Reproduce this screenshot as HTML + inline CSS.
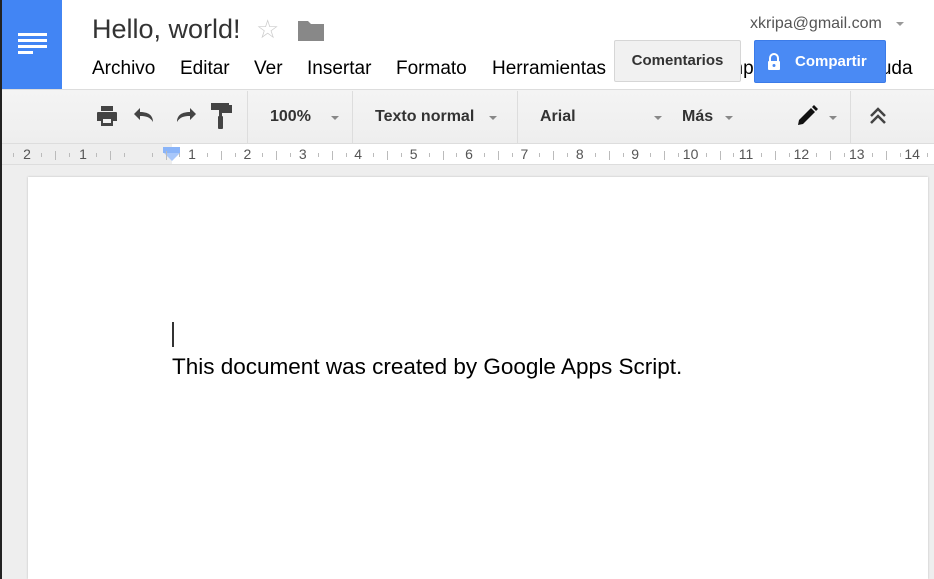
<!DOCTYPE html>
<html><head><meta charset="utf-8"><style>
*{margin:0;padding:0;box-sizing:border-box}
body{width:934px;height:579px;overflow:hidden;background:#eee;font-family:"Liberation Sans",Arial,sans-serif;position:relative}
.a{position:absolute}
.menu span{position:absolute;top:58px;font-size:19px;color:#000}
.tb{font-size:16px;font-weight:bold;color:#333;top:108px}
.dd{width:0;height:0;border-left:4px solid transparent;border-right:4px solid transparent;border-top:4px solid #888;top:116px}
.sep{top:91px;width:1px;height:52px;background:#ddd}
.rn{top:146px;font-size:14px;color:#555;transform:translateX(-50%)}
.tk{top:151px;width:1px;height:9px;background:#bbb}
.tks{top:153px;width:1px;height:4px;background:#bbb}
</style></head><body>
<div class="a" style="left:0;top:0;width:2px;height:579px;background:#222"></div>
<div class="a" style="left:2px;top:0;width:932px;height:90px;background:#fff"></div>
<div class="a" style="left:2px;top:0;width:60px;height:90px;background:#4285f4"></div>
<div class="a" style="left:18px;top:33px;width:29px;height:3px;background:#fff"></div>
<div class="a" style="left:18px;top:39px;width:29px;height:3px;background:#fff"></div>
<div class="a" style="left:18px;top:45px;width:29px;height:3px;background:#fff"></div>
<div class="a" style="left:18px;top:51px;width:15px;height:3px;background:#fff"></div>
<div class="a" style="left:92px;top:14px;font-size:27px;color:#333">Hello, world!</div>
<div class="a" style="left:256px;top:14px;font-size:26px;color:#ccc">☆</div>
<svg class="a" style="left:298px;top:19px" width="26" height="22"><path d="M0 2h10l3 3h13v17H0z" fill="#888"/></svg>
<div class="menu">
<span style="left:92px">Archivo</span><span style="left:180px">Editar</span><span style="left:254px">Ver</span><span style="left:307px">Insertar</span><span style="left:396px">Formato</span><span style="left:492px">Herramientas</span><span style="left:703px">Complementos</span><span style="left:859px">Ayuda</span>
</div>
<div class="a" style="left:750px;top:15px;font-size:16px;color:#555">xkripa@gmail.com</div>
<div class="a dd" style="top:22px;left:896px;border-top-color:#999"></div>
<div class="a" style="left:614px;top:40px;width:127px;height:42px;background:#f1f1f1;border:1px solid #d6d6d6;border-radius:2px;font-size:15px;font-weight:bold;color:#333;text-align:center;line-height:40px">Comentarios</div>
<div class="a" style="left:754px;top:40px;width:132px;height:43px;background:#4a8af4;border:1px solid #3b7be8;border-radius:2px;font-size:15px;font-weight:bold;color:#fff;line-height:41px;padding-left:40px">Compartir</div>
<svg class="a" style="left:767px;top:53px" width="14" height="17"><path d="M3 8V5a4 4 0 0 1 8 0v3" stroke="#fff" stroke-width="2" fill="none"/><rect x="1" y="8" width="12" height="9" rx="1" fill="#fff"/><circle cx="7" cy="12.5" r="1.5" fill="#4a8af4"/></svg>
<div class="a" style="left:2px;top:89px;width:932px;height:1px;background:#ddd"></div>
<div class="a" style="left:2px;top:90px;width:932px;height:53px;background:linear-gradient(#f4f4f4,#eee)"></div>
<div class="a sep" style="left:247px"></div><div class="a sep" style="left:352px"></div><div class="a sep" style="left:517px"></div><div class="a sep" style="left:850px"></div>
<svg class="a" style="left:95px;top:104px" width="24" height="24"><path d="M6 2h12v5H6zM3 8h18a1 1 0 0 1 1 1v8h-4v5H6v-5H2V9a1 1 0 0 1 1-1z" fill="#444"/><rect x="8" y="15" width="8" height="4" fill="#f2f2f2"/></svg>
<svg class="a" style="left:134px;top:105px" width="24" height="22"><path d="M6 7V3L0 9l6 6v-4c6 0 10 1 13 6 0-7-5-10-13-10z" fill="#444"/></svg>
<svg class="a" style="left:172px;top:105px" width="24" height="22"><path d="M18 7V3l6 6-6 6v-4c-6 0-10 1-13 6 0-7 5-10 13-10z" fill="#444"/></svg>
<svg class="a" style="left:210px;top:103px" width="24" height="26"><path d="M1 0h18v7H1zM19 2h3v8H12v4H9v-7h10z" fill="#444"/><rect x="8" y="13" width="5" height="13" rx="1" fill="#444"/></svg>
<div class="a tb" style="left:270px">100%</div><div class="a dd" style="left:331px"></div>
<div class="a tb" style="left:375px">Texto normal</div><div class="a dd" style="left:489px"></div>
<div class="a tb" style="left:540px">Arial</div><div class="a dd" style="left:654px"></div>
<div class="a tb" style="left:682px">Más</div><div class="a dd" style="left:725px"></div>
<svg class="a" style="left:796px;top:105px" width="22" height="22"><path d="M2 20l1-5L15 3l4 4L7 19z" fill="#111"/><path d="M16 2l2-2 4 4-2 2z" fill="#111"/></svg>
<div class="a dd" style="left:829px"></div>
<svg class="a" style="left:868px;top:107px" width="20" height="18"><path d="M3 9l7-7 7 7M3 16l7-7 7 7" stroke="#444" stroke-width="2.5" fill="none"/></svg>
<div class="a" style="left:2px;top:143px;width:932px;height:1px;background:#ddd"></div>
<div class="a" style="left:2px;top:144px;width:170px;height:20px;background:#eee"></div>
<div class="a" style="left:172px;top:144px;width:762px;height:20px;background:#fff"></div>
<div class="a" style="left:2px;top:164px;width:932px;height:1px;background:#ddd"></div>
<div class="a" style="left:163px;top:147px;width:17px;height:6px;background:#8ab4f8"></div>
<div class="a" style="left:164px;top:153px;width:0;height:0;border-left:8px solid transparent;border-right:8px solid transparent;border-top:8px solid #a8c7fa"></div>
<div id="r"></div>
<div class="a" style="left:28px;top:177px;width:900px;height:402px;background:#fff;box-shadow:0 0 2px #bbb"></div>
<div class="a" style="left:172px;top:322px;width:2px;height:25px;background:#333"></div>
<div class="a" style="left:172px;top:354px;font-size:22.5px;color:#000">This document was created by Google Apps Script.</div>
<script>
var r=document.getElementById('r'),h='';
var nums=[[27,'2'],[83,'1']];
for(var i=1;i<=14;i++)nums.push([192+(i-1)*55.4,String(i)]);
nums.forEach(function(n){h+='<div class="a rn" style="left:'+n[0]+'px">'+n[1]+'</div>';});
for(var x=27-55.4;x<934;x+=55.4){
 if(x>150&&x<190)continue;
 h+='<div class="a tk" style="left:'+(x+27.7)+'px"></div>';
 h+='<div class="a tks" style="left:'+(x+13.8)+'px"></div>';
 h+='<div class="a tks" style="left:'+(x+41.5)+'px"></div>';
}
r.innerHTML=h;
</script>
</body></html>
